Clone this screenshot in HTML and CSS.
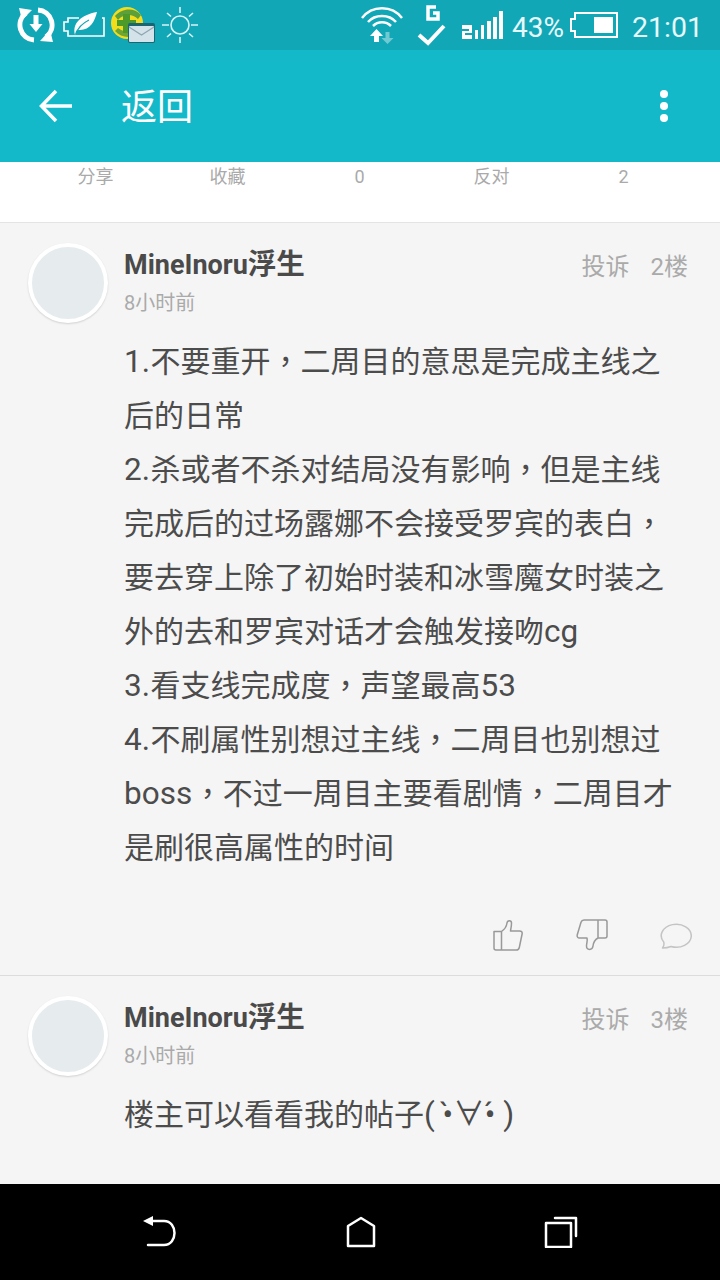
FILE: index.html
```html
<!DOCTYPE html>
<html lang="zh-CN">
<head>
    <meta charset="UTF-8">
    <meta name="viewport" content="width=device-width, initial-scale=1.0">
    <title>返回</title>
    <link rel="stylesheet" href="styles.css">
</head>
<body>
    <!-- Status bar -->
    <div class="status-bar">
        <div class="status-left">
            <svg class="icon-sync" width="38" height="38" viewBox="0 0 38 38" fill="none">
                <path d="M17 34A15 15 0 0 1 9 7" stroke="#fff" stroke-width="5"/>
                <path d="M21 4A15 15 0 0 1 29 31" stroke="#fff" stroke-width="5"/>
                <path d="M2 2l13 2-10 10z" fill="#fff"/>
                <path d="M36 36l-13-1 10-11z" fill="#fff"/>
                <path d="M16.500 9h5v9h4l-6.500 8-6.500-8h4z" fill="#fff"/>
            </svg>
            <svg class="icon-leaf" width="42" height="28" viewBox="0 0 42 28" fill="none">
                <path d="M16 7H5v4H1v9h4v5h36V7h-2" stroke="#fff" stroke-width="1.600"/>
                <path d="M12 24C9 12 18 4 34 1c-2 9-7 18-17 18-2 0-3 0-4 1z" fill="#fff"/>
                <path d="M13 23c2-7 7-11 13-14" stroke="#12a7b6" stroke-width="1.200"/>
            </svg>
            <svg class="icon-notify" width="46" height="38" viewBox="0 0 46 38">
                <circle cx="17" cy="17" r="16" fill="#f2dc1c"/>
                <path d="M5 10C12 2 24 1 31 9l-3 4C22 7 13 8 8 14z" fill="#5d9f3a"/>
                <path d="M5 25c6 7 17 8 25 2l-2-3c-6 3-14 3-20-2z" fill="#6fa536"/>
                <path d="M13 8h7v6h6v6h-6v7h-7v-7H7v-6h6z" fill="#4c9a2a"/>
                <rect x="18" y="17" width="27" height="20" rx="2" fill="#1c6470"/>
                <rect x="19" y="20" width="25" height="16" rx="1" fill="#d4e3ea"/>
                <path d="M19 21l12.500 8L44 21" fill="none" stroke="#8fa5b0" stroke-width="1.200"/>
            </svg>
            <svg class="icon-sun" width="36" height="38" viewBox="0 0 36 38" fill="none" stroke="#d8f3f6" stroke-width="1.600">
                <circle cx="18" cy="19" r="9"/>
                <path d="M18 1v6M18 31v6M0 19h7M29 19h7M5 7l4 3.500M27 27.500l4 3.500M31 7l-4 3.500M9 27.500l-4 3.500"/>
            </svg>
        </div>
        <div class="status-right">
            <svg class="icon-wifi" width="42" height="38" viewBox="0 0 42 38" fill="none">
                <path d="M1 12C11-1 31-1 41 12" stroke="#fff" stroke-width="2.500"/>
                <path d="M7 16C14 8 28 8 35 16" stroke="#fff" stroke-width="2.500"/>
                <path d="M12 20c5-5 13-5 18 0" stroke="#fff" stroke-width="2.500"/>
                <path d="M15.500 23l-6.500 7h4v6h5v-6h4z" fill="#fff"/>
                <path d="M24.500 26v6h-4l6 6 6-6h-4v-6z" fill="#fff" opacity=".4"/>
            </svg>
            <svg class="icon-check" width="30" height="41" viewBox="0 0 30 41" fill="none">
                <path d="M19 2h-8v12h10V8h-5" stroke="#fff" stroke-width="3.500"/>
                <path d="M2 30l9 8L27 21" stroke="#fff" stroke-width="4"/>
            </svg>
            <svg class="icon-signal" width="41" height="28" viewBox="0 0 41 28" fill="#fff">
                <path d="M0 14h10v8H3v2h7v4H0v-8h7v-2H0z"/>
                <rect x="13" y="19" width="3" height="9"/>
                <rect x="19" y="14" width="3" height="14"/>
                <rect x="25" y="10" width="4" height="18"/>
                <rect x="31" y="6" width="4" height="22"/>
                <rect x="37" y="0" width="4" height="28"/>
            </svg>
            <span class="battery-text">43%</span>
            <svg class="icon-battery" width="48" height="26" viewBox="0 0 48 26" fill="none">
                <path d="M5 7V1h42v24H5v-6H1V7z" stroke="#fff" stroke-width="2"/>
                <rect x="24" y="5" width="19" height="16" fill="#fff"/>
            </svg>
            <span class="clock">21:01</span>
        </div>
    </div>

    <!-- App bar -->
    <div class="app-bar">
        <svg class="back-arrow" width="34" height="34" viewBox="0 0 34 34" fill="none" stroke="#fff" stroke-width="3.500">
            <path d="M33 17H3M17 2L2.500 17 17 32"/>
        </svg>
        <span class="app-title">返回</span>
        <div class="more-dots"><i></i><i></i><i></i></div>
    </div>

    <!-- Post actions -->
    <div class="post-actions">
        <span>分享</span>
        <span>收藏</span>
        <span>0</span>
        <span>反对</span>
        <span>2</span>
    </div>

    <div class="comments">
        <div class="comment">
            <div class="avatar"></div>
            <div class="comment-main">
                <div class="comment-head">
                    <span class="comment-name">MineInoru<span class="name-cjk">浮生</span></span>
                    <span class="comment-meta"><span>投诉</span><span>2楼</span></span>
                </div>
                <div class="comment-time">8小时前</div>
                <div class="comment-text" lang="zh-Hant">
                    <span class="latin">1.</span>不要重开，二周目的意思是完成主线之<br>
                    后的日常<br>
                    <span class="latin">2.</span>杀或者不杀对结局没有影响，但是主线<br>
                    完成后的过场露娜不会接受罗宾的表白，<br>
                    要去穿上除了初始时装和冰雪魔女时装之<br>
                    外的去和罗宾对话才会触发接吻<span class="latin">cg</span><br>
                    <span class="latin">3.</span>看支线完成度，声望最高<span class="latin">53</span><br>
                    <span class="latin">4.</span>不刷属性别想过主线，二周目也别想过<br>
                    <span class="latin">boss</span>，不过一周目主要看剧情，二周目才<br>
                    是刷很高属性的时间
                </div>
                <div class="comment-actions">
                    <svg width="32" height="32" viewBox="0 0 32 32" fill="none" stroke="#999" stroke-width="1.500" stroke-linejoin="round">
                        <path d="M2 12.500h7.500V31H4a2 2 0 0 1-2-2zM9.500 12.500c3-2 5-5 5.500-8.500 .3-3 4.500-3 4.500 0 0 3-.5 5-1 8h9c2 0 3 1.200 2.600 3l-2.800 13.500c-.3 1.500-1.300 2.500-3 2.500H9.500"/>
                    </svg>
                    <svg width="32" height="32" viewBox="0 0 32 32" fill="none" stroke="#999" stroke-width="1.500" stroke-linejoin="round">
                        <path d="M22 1h7a2 2 0 0 1 2 2v14a2 2 0 0 1-2 2h-7zM22 1H8c-1.500 0-2.500.8-3 2.300L1.200 16c-.4 1.600.6 3 2.200 3H11c.8 3-.5 5-.5 8 0 4.500 6 4.500 6.500 0 .3-3 1.500-6 5-8"/>
                    </svg>
                    <svg width="32" height="32" viewBox="0 0 32 32" fill="none" stroke="#c4c4c4" stroke-width="1.500" stroke-linejoin="round">
                        <path d="M2.500 29c1.500-2 1.800-4 1.200-6A15 11.500 0 1 1 11 27.500c-2.500 1-5.500 1.500-8.500 1.500z"/>
                    </svg>
                </div>
            </div>
        </div>
        <div class="comment">
            <div class="avatar"></div>
            <div class="comment-main">
                <div class="comment-head">
                    <span class="comment-name">MineInoru<span class="name-cjk">浮生</span></span>
                    <span class="comment-meta"><span>投诉</span><span>3楼</span></span>
                </div>
                <div class="comment-time">8小时前</div>
                <div class="comment-text" lang="zh-Hant">楼主可以看看我的帖子<span class="latin">( •̀∀•́ )</span></div>
            </div>
        </div>
    </div>

    <!-- Android nav -->
    <div class="nav-bar">
        <svg width="36" height="34" viewBox="0 0 36 34" fill="none" stroke="#fff" stroke-width="2.500" stroke-linecap="round">
            <path d="M10 6h12c14 0 14 24 0 24H6"/>
            <path d="M1 6l10-5v10z" fill="#fff" stroke="none"/>
        </svg>
        <svg width="30" height="32" viewBox="0 0 30 32" fill="none" stroke="#fff" stroke-width="2.500" stroke-linejoin="round">
            <path d="M2 10L15 2l13 8v20H2z"/>
        </svg>
        <svg width="34" height="32" viewBox="0 0 34 32" fill="none" stroke="#fff" stroke-width="2.500" stroke-linejoin="round">
            <path d="M2 7h25v24H2z"/>
            <path d="M11 2h21v18" stroke-linecap="round"/>
        </svg>
    </div>
</body>
</html>
```

FILE: styles.css
```css
* {
    box-sizing: border-box;
}
body {
    margin: 0;
    width: 720px;
    height: 1280px;
    overflow: hidden;
    display: flex;
    flex-direction: column;
    background-color: #f5f5f5;
    font-family: Roboto, "Noto Sans CJK SC", sans-serif;
}

/* status bar */
.status-bar {
    height: 50px;
    flex: none;
    display: flex;
    justify-content: space-between;
    align-items: center;
    padding: 0 17px 0 17px;
    background-color: #12a7b6;
    color: #e6f8fa;
}
.status-left, .status-right {
    display: flex;
    align-items: center;
}
.icon-leaf {
    margin-left: 8px;
}
.icon-notify {
    margin-left: 5px;
}
.icon-sun {
    margin-left: 6px;
}
.icon-check {
    margin-left: 14px;
}
.icon-signal {
    margin-left: 15px;
}
.battery-text {
    font-size: 28px;
    line-height: 32px;
    margin-left: 9px;
    margin-top: 5px;
}
.icon-battery {
    margin-left: 6px;
}
.clock {
    font-size: 28.500px;
    line-height: 32px;
    margin-left: 14px;
    margin-top: 5px;
}

/* app bar */
.app-bar {
    height: 112px;
    flex: none;
    display: flex;
    align-items: center;
    padding: 0 52px 0 39px;
    background-color: #14b9c9;
    color: #ffffff;
}
.app-title {
    font-size: 36px;
    margin-left: 48px;
    margin-bottom: 5px;
    flex: 1;
}
.more-dots {
    display: flex;
    flex-direction: column;
    gap: 4px;
}
.more-dots i {
    display: block;
    width: 8px;
    height: 8px;
    border-radius: 50%;
    background-color: #ffffff;
}

.post-actions {
    height: 61px;
    flex: none;
    display: grid;
    grid-template-columns: repeat(5, 132px);
    padding: 0 30px;
    background-color: #ffffff;
    border-bottom: 1px solid #e4e4e4;
    color: #aaaaaa;
    font-size: 18px;
    line-height: 30px;
    text-align: center;
}
.post-actions span {
    margin-left: -1px;
}

/* comments */
.comments {
    flex: 1;
}
.comment {
    display: flex;
    gap: 17px;
    padding: 21px 29px 0;
    border-bottom: 1px solid #dcdcdc;
}
.comment:last-child {
    border-bottom: none;
}
.avatar {
    width: 80px;
    height: 80px;
    flex: none;
    margin: -1px;
    border-radius: 50%;
    border: 4px solid #ffffff;
    background-color: #e6ebee;
    box-shadow: 0 1px 2px rgba(0, 0, 0, 0.15);
}
.comment-main {
    flex: 1;
    min-width: 0;
}
.comment-head {
    display: flex;
    justify-content: space-between;
    align-items: flex-start;
    height: 40px;
}
.comment-name {
    font-size: 27px;
    font-weight: bold;
    line-height: 42px;
    color: #4a4a4a;
}
.name-cjk {
    font-size: 28.500px;
    line-height: 1;
}
.comment-meta {
    display: flex;
    gap: 21px;
    margin-right: 3px;
    font-size: 24px;
    line-height: 46px;
    color: #aaaaaa;
}
.comment-time {
    margin-top: 5px;
    height: 28px;
    font-size: 20px;
    line-height: 28px;
    color: #aaaaaa;
}
.comment-text {
    margin-top: 18px;
    font-family: Roboto, "Noto Sans CJK TC", sans-serif;
    font-size: 30px;
    line-height: 54px;
    color: #4c4c4c;
}
.latin {
    font-size: 31.500px;
    line-height: 1;
    margin-right: 0.500px;
}
.comment-actions {
    display: flex;
    justify-content: flex-end;
    gap: 52px;
    margin-top: 44px;
    margin-right: -1px;
    height: 56px;
}

/* android nav */
.nav-bar {
    height: 96px;
    flex: none;
    display: flex;
    justify-content: space-between;
    align-items: center;
    padding: 0 142px 0 142px;
    background-color: #000000;
}
```
